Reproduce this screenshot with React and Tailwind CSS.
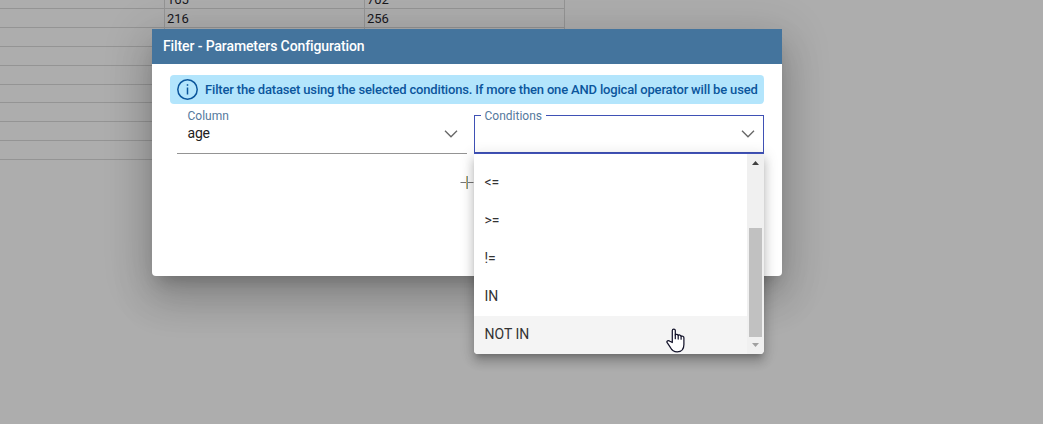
import React from "react";

const rows = [
  { h: "h-[9px]", a: "165", b: "702" },
  { h: "h-[19px]", a: "216", b: "256" },
  { h: "h-[19px]" },
  { h: "h-[19px]" },
  { h: "h-[19px]" },
  { h: "h-[18px]" },
  { h: "h-[19px]" },
  { h: "h-[19px]" },
  { h: "h-[19px]" },
];

function DataGrid() {
  return (
    <div className="w-[565px] text-[13px] text-[#17171c]">
      {rows.map((row, i) => (
        <div key={i} className={`flex items-end overflow-hidden border-b border-[#949494] leading-[16px] ${row.h}`}>
          <div className="h-full w-[165px] shrink-0 border-r border-[#949494]" />
          <div className="flex h-full w-[200px] shrink-0 items-end border-r border-[#949494] pl-[2px] tracking-[-0.1px]">{row.a}</div>
          <div className="flex h-full w-[200px] shrink-0 items-end border-r border-[#949494] pl-[2px] tracking-[-0.1px]">{row.b}</div>
        </div>
      ))}
    </div>
  );
}

function Chevron() {
  return (
    <svg width="14" height="8" viewBox="0 0 14 8" fill="none" stroke="#666" strokeWidth="1.3">
      <path d="M1 0.8 L7 6.8 L13 0.8" />
    </svg>
  );
}

function HandCursor() {
  return (
    <svg width="20" height="25" viewBox="0 0 20 25" fill="#fff" stroke="#14142b" strokeWidth="1.25" strokeLinejoin="round" strokeLinecap="round">
      <path d="M6.3 14.5V2.6C6.3 .5 9.3 .5 9.3 2.6V7C9.8 5.9 12 6.1 12.2 7.5C12.9 6.6 15 6.9 15.1 8.3C16 7.7 17.9 8.2 17.9 9.8V16.5C17.9 20 16.2 23.8 11.2 23.8C6.9 23.8 5.3 21.3 4.2 19.2L1 14.4C.3 13.1 2.3 11.9 3.9 13.2Z" />
      <path d="M9.3 6.8V10.7M12.2 7.5V11M15.1 8.3V11.2" fill="none" />
    </svg>
  );
}

const options = ["<=", ">=", "!=", "IN", "NOT IN"];

function OptionsMenu() {
  return (
    <div className="absolute top-[37px] left-[-1px] z-10 flex h-[201px] w-[290px] overflow-hidden rounded-b-[4px] border-t border-[#3f51b5] bg-white shadow-[0_5px_5px_-3px_rgba(0,0,0,0.2),0_8px_10px_1px_rgba(0,0,0,0.14),0_3px_14px_2px_rgba(0,0,0,0.12)]">
      <div className="flex flex-1 flex-col justify-end">
        {options.map((o) => (
          <div
            key={o}
            className={`flex h-[38px] items-center pb-px pl-[10.5px] text-[14px] text-[#333] ${
              o === "NOT IN" ? "bg-[#f4f4f4]" : ""
            }`}
          >
            {o}
          </div>
        ))}
      </div>
      <div className="flex w-[17px] flex-col items-center justify-between bg-[#f0f0f0] pt-[7px] pb-[7px]">
        <svg width="7" height="4" viewBox="0 0 7 4" fill="#404040"><path d="M0 4L3.5 0L7 4Z" /></svg>
        <div className="mt-auto mb-[6px] h-[109px] w-[13px] bg-[#c1c1c1]" />
        <svg width="7" height="4" viewBox="0 0 7 4" fill="#a0a0a0"><path d="M0 0L3.5 4L7 0Z" /></svg>
      </div>
      <div className="absolute top-[174px] left-[192px]">
        <HandCursor />
      </div>
    </div>
  );
}

export default function App() {
  return (
    <div className="relative h-[424px] w-[1043px] overflow-hidden bg-[#adadad] font-['Roboto',sans-serif]">
      <DataGrid />
      <div className="absolute top-[29px] left-[152px] flex h-[247px] w-[630px] flex-col rounded-b-[4px] bg-white shadow-[0_11px_15px_-7px_rgba(0,0,0,0.2),0_24px_38px_3px_rgba(0,0,0,0.14),0_9px_46px_8px_rgba(0,0,0,0.12)]">
        <header className="flex h-[35px] shrink-0 items-center bg-[#44749d] pl-[11px] text-[14px] font-medium tracking-[-0.11px] text-white">
          Filter - Parameters Configuration
        </header>
        <div className="flex flex-col px-[18px] pt-[11px]">
          <div className="flex h-[29px] items-center gap-[7px] rounded-[4px] bg-[#b3e5fc] pl-[7px] text-[13px] font-medium tracking-[-0.17px] whitespace-nowrap text-[#0b569c]">
            <svg width="21" height="21" viewBox="0 0 21 21" fill="none" stroke="#0b569c" strokeWidth="1.5" className="shrink-0">
              <circle cx="10.5" cy="10.5" r="9.7" />
              <path d="M10.5 8.5V15.5" />
              <path d="M10.5 5.2V6.8" />
            </svg>
            <span>Filter the dataset using the selected conditions. If more then one AND logical operator will be used</span>
          </div>
          <div className="mt-[11px] flex gap-[7px] pl-[7px]">
            <div className="flex h-[39px] w-[290px] items-start justify-between border-b border-[#949494] pr-[9px] pl-[10.5px]">
              <div className="-mt-[7px] flex flex-col">
                <label className="text-[12px] leading-[16px] text-[#55799d]">Column</label>
                <span className="text-[14px] leading-[18px] tracking-[-0.2px] text-[#212121]">age</span>
              </div>
              <div className="mt-[15px]"><Chevron /></div>
            </div>
            <div className="relative flex h-[39px] w-[290px] items-start justify-between border border-b-2 border-[#3f51b5] pr-[8px] pl-[6px]">
              <label className="-mt-[8px] bg-white pr-[4px] pl-[3.5px] text-[12px] leading-[16px] text-[#55799d]">Conditions</label>
              <div className="mt-[14px]"><Chevron /></div>
              <OptionsMenu />
            </div>
          </div>
          <div className="mt-[21px] ml-[290px]">
            <svg width="14" height="14" viewBox="0 0 14 14" fill="none">
              <path d="M0.5 7.5H13.5" stroke="#777" />
              <path d="M6.5 1V14" stroke="#e0b568" />
              <path d="M7.5 1V14" stroke="#6f9cb5" />
            </svg>
          </div>
        </div>
      </div>
    </div>
  );
}
